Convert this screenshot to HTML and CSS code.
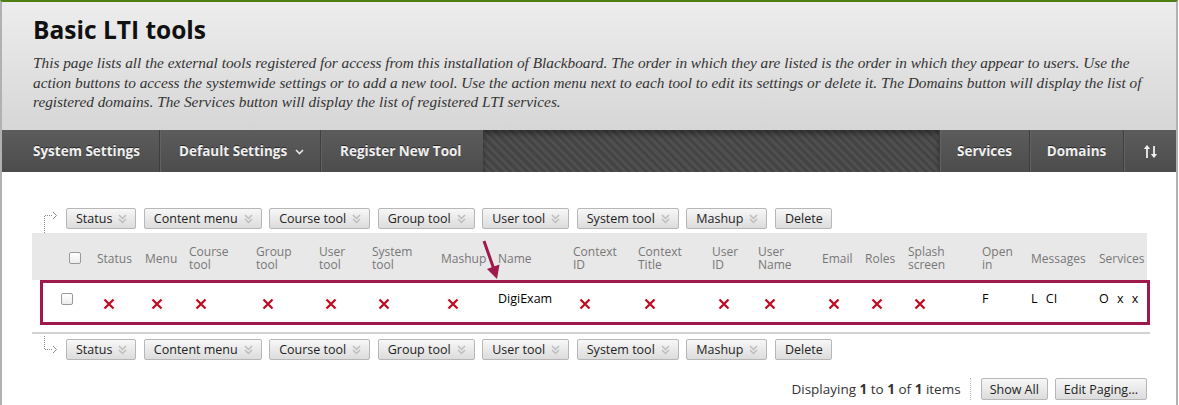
FILE: index.html
```html
<!DOCTYPE html>
<html lang="en">
<head>
<meta charset="utf-8">
<title>Basic LTI tools</title>
<link rel="stylesheet" href="styles.css">
</head>
<body>
<div class="frame">
  <header class="page-header">
    <h1 class="title">Basic LTI tools</h1>
    <p class="desc">This page lists all the external tools registered for access from this installation of Blackboard. The order in which they are listed is the order in which they appear to users. Use the action buttons to access the systemwide settings or to add a new tool. Use the action menu next to each tool to edit its settings or delete it. The Domains button will display the list of registered domains. The Services button will display the list of registered LTI services.</p>
  </header>

  <nav class="navbar">
    <div class="nav-left">
      <a class="nav-btn n-sys">System Settings</a>
      <a class="nav-btn n-def">Default Settings <svg class="nav-chev" width="9" height="6" viewBox="0 0 9 6"><polyline points="1,1 4.5,4.5 8,1" fill="none" stroke="#e6e6e6" stroke-width="1.6"/></svg></a>
      <a class="nav-btn n-reg">Register New Tool</a>
    </div>
    <div class="nav-stripes"></div>
    <div class="nav-right">
      <a class="nav-btn services">Services</a>
      <a class="nav-btn domains">Domains</a>
      <a class="nav-btn sort"><svg width="15" height="15" viewBox="0 0 15 15"><line x1="4" y1="14" x2="4" y2="3" stroke="#f0f0f0" stroke-width="1.8"/><polygon points="0.8,5 4,1 7.2,5" fill="#f0f0f0"/><line x1="11" y1="2" x2="11" y2="12" stroke="#f0f0f0" stroke-width="1.8"/><polygon points="7.8,10 11,14 14.2,10" fill="#f0f0f0"/></svg></a>
    </div>
  </nav>

  <main class="content">
    <div class="actionbar">
      <svg class="flow-icon" width="20" height="21" viewBox="0 0 20 21"><path d="M4.5 27 V7.5 H13" fill="none" stroke="#8a8a8a" stroke-width="1" stroke-dasharray="1 1"/><polyline points="13,4 16.5,7.5 13,11" fill="none" stroke="#8a8a8a" stroke-width="1"/></svg>
      <button class="abtn">Status<svg class="dchev" width="9" height="10" viewBox="0 0 9 10"><polyline points="1,1 4.5,4.5 8,1" /><polyline points="1,5 4.5,8.5 8,5"/></svg></button>
      <button class="abtn">Content menu<svg class="dchev" width="9" height="10" viewBox="0 0 9 10"><polyline points="1,1 4.5,4.5 8,1" /><polyline points="1,5 4.5,8.5 8,5"/></svg></button>
      <button class="abtn">Course tool<svg class="dchev" width="9" height="10" viewBox="0 0 9 10"><polyline points="1,1 4.5,4.5 8,1" /><polyline points="1,5 4.5,8.5 8,5"/></svg></button>
      <button class="abtn">Group tool<svg class="dchev" width="9" height="10" viewBox="0 0 9 10"><polyline points="1,1 4.5,4.5 8,1" /><polyline points="1,5 4.5,8.5 8,5"/></svg></button>
      <button class="abtn">User tool<svg class="dchev" width="9" height="10" viewBox="0 0 9 10"><polyline points="1,1 4.5,4.5 8,1" /><polyline points="1,5 4.5,8.5 8,5"/></svg></button>
      <button class="abtn">System tool<svg class="dchev" width="9" height="10" viewBox="0 0 9 10"><polyline points="1,1 4.5,4.5 8,1" /><polyline points="1,5 4.5,8.5 8,5"/></svg></button>
      <button class="abtn">Mashup<svg class="dchev" width="9" height="10" viewBox="0 0 9 10"><polyline points="1,1 4.5,4.5 8,1" /><polyline points="1,5 4.5,8.5 8,5"/></svg></button>
      <button class="abtn">Delete</button>
    </div>

    <div class="grid-wrap">
      <table class="grid">
        <colgroup>
          <col style="width:65px"><col style="width:48px"><col style="width:44px"><col style="width:67px"><col style="width:63px"><col style="width:53px"><col style="width:69px"><col style="width:57px"><col style="width:75px"><col style="width:65px"><col style="width:74px"><col style="width:46px"><col style="width:64px"><col style="width:43px"><col style="width:43px"><col style="width:74px"><col style="width:49px"><col style="width:68px"><col style="width:48px">
        </colgroup>
        <thead>
          <tr>
            <th class="cbcell"><input type="checkbox" class="cb"></th>
            <th>Status</th>
            <th>Menu</th>
            <th>Course<br>tool</th>
            <th>Group<br>tool</th>
            <th>User<br>tool</th>
            <th>System<br>tool</th>
            <th>Mashup</th>
            <th>Name</th>
            <th>Context<br>ID</th>
            <th>Context<br>Title</th>
            <th>User<br>ID</th>
            <th>User<br>Name</th>
            <th>Email</th>
            <th>Roles</th>
            <th>Splash<br>screen</th>
            <th>Open<br>in</th>
            <th>Messages</th>
            <th>Services</th>
          </tr>
        </thead>
        <tbody>
          <tr>
            <td class="cbcell"><input type="checkbox" class="cb"></td>
            <td><svg class="xmark" viewBox="0 0 12 12"><path d="M1.5 1.5 L10.5 10.5 M10.5 1.5 L1.5 10.5"/></svg></td>
            <td><svg class="xmark" viewBox="0 0 12 12"><path d="M1.5 1.5 L10.5 10.5 M10.5 1.5 L1.5 10.5"/></svg></td>
            <td><svg class="xmark" viewBox="0 0 12 12"><path d="M1.5 1.5 L10.5 10.5 M10.5 1.5 L1.5 10.5"/></svg></td>
            <td><svg class="xmark" viewBox="0 0 12 12"><path d="M1.5 1.5 L10.5 10.5 M10.5 1.5 L1.5 10.5"/></svg></td>
            <td><svg class="xmark" viewBox="0 0 12 12"><path d="M1.5 1.5 L10.5 10.5 M10.5 1.5 L1.5 10.5"/></svg></td>
            <td><svg class="xmark" viewBox="0 0 12 12"><path d="M1.5 1.5 L10.5 10.5 M10.5 1.5 L1.5 10.5"/></svg></td>
            <td><svg class="xmark" viewBox="0 0 12 12"><path d="M1.5 1.5 L10.5 10.5 M10.5 1.5 L1.5 10.5"/></svg></td>
            <td>DigiExam</td>
            <td><svg class="xmark" viewBox="0 0 12 12"><path d="M1.5 1.5 L10.5 10.5 M10.5 1.5 L1.5 10.5"/></svg></td>
            <td><svg class="xmark" viewBox="0 0 12 12"><path d="M1.5 1.5 L10.5 10.5 M10.5 1.5 L1.5 10.5"/></svg></td>
            <td><svg class="xmark" viewBox="0 0 12 12"><path d="M1.5 1.5 L10.5 10.5 M10.5 1.5 L1.5 10.5"/></svg></td>
            <td><svg class="xmark" viewBox="0 0 12 12"><path d="M1.5 1.5 L10.5 10.5 M10.5 1.5 L1.5 10.5"/></svg></td>
            <td><svg class="xmark" viewBox="0 0 12 12"><path d="M1.5 1.5 L10.5 10.5 M10.5 1.5 L1.5 10.5"/></svg></td>
            <td><svg class="xmark" viewBox="0 0 12 12"><path d="M1.5 1.5 L10.5 10.5 M10.5 1.5 L1.5 10.5"/></svg></td>
            <td><svg class="xmark" viewBox="0 0 12 12"><path d="M1.5 1.5 L10.5 10.5 M10.5 1.5 L1.5 10.5"/></svg></td>
            <td>F</td>
            <td class="spaced">L CI</td>
            <td class="spaced">O x x</td>
          </tr>
        </tbody>
      </table>
      <div class="highlight"></div>
      <svg class="pointer" width="480" height="50" viewBox="0 0 480 50"><line x1="452" y1="8" x2="461.5" y2="35" stroke="#a0194c" stroke-width="3"/><polygon points="465,46 467.5,31.5 455,36" fill="#a0194c"/></svg>
    </div>

    <div class="rule"></div>

    <div class="actionbar bottom">
      <svg class="flow-icon" width="20" height="21" viewBox="0 0 20 21"><path d="M4.5 -3 V10.5 H13" fill="none" stroke="#8a8a8a" stroke-width="1" stroke-dasharray="1 1"/><polyline points="13,7 16.5,10.5 13,14" fill="none" stroke="#8a8a8a" stroke-width="1"/></svg>
      <button class="abtn">Status<svg class="dchev" width="9" height="10" viewBox="0 0 9 10"><polyline points="1,1 4.5,4.5 8,1" /><polyline points="1,5 4.5,8.5 8,5"/></svg></button>
      <button class="abtn">Content menu<svg class="dchev" width="9" height="10" viewBox="0 0 9 10"><polyline points="1,1 4.5,4.5 8,1" /><polyline points="1,5 4.5,8.5 8,5"/></svg></button>
      <button class="abtn">Course tool<svg class="dchev" width="9" height="10" viewBox="0 0 9 10"><polyline points="1,1 4.5,4.5 8,1" /><polyline points="1,5 4.5,8.5 8,5"/></svg></button>
      <button class="abtn">Group tool<svg class="dchev" width="9" height="10" viewBox="0 0 9 10"><polyline points="1,1 4.5,4.5 8,1" /><polyline points="1,5 4.5,8.5 8,5"/></svg></button>
      <button class="abtn">User tool<svg class="dchev" width="9" height="10" viewBox="0 0 9 10"><polyline points="1,1 4.5,4.5 8,1" /><polyline points="1,5 4.5,8.5 8,5"/></svg></button>
      <button class="abtn">System tool<svg class="dchev" width="9" height="10" viewBox="0 0 9 10"><polyline points="1,1 4.5,4.5 8,1" /><polyline points="1,5 4.5,8.5 8,5"/></svg></button>
      <button class="abtn">Mashup<svg class="dchev" width="9" height="10" viewBox="0 0 9 10"><polyline points="1,1 4.5,4.5 8,1" /><polyline points="1,5 4.5,8.5 8,5"/></svg></button>
      <button class="abtn">Delete</button>
    </div>

    <div class="paging">
      <span class="paging-text">Displaying <b>1</b> to <b>1</b> of <b>1</b> items</span>
      <span class="paging-sep"></span>
      <button class="pbtn">Show All</button>
      <button class="pbtn">Edit Paging...</button>
    </div>
  </main>
</div>
</body>
</html>
```

FILE: styles.css
```css
* { box-sizing: border-box; }

html, body {
  margin: 0;
  padding: 0;
  background: #ffffff;
}

body {
  width: 1179px;
  height: 405px;
  overflow: hidden;
  font-family: "Open Sans", "DejaVu Sans", sans-serif;
}

.frame {
  width: 1178px;
  height: 405px;
  border-top: 2px solid #4f7f12;
  border-left: 2px solid #b1b1b1;
  border-right: 2px solid #b1b1b1;
  background: #ffffff;
}

/* ---------- header ---------- */
.page-header {
  height: 128px;
  padding: 13px 0 0 31px;
  background: linear-gradient(#ededed, #d6d6d6);
}

.title {
  margin: 0;
  font-size: 24.5px;
  line-height: 30px;
  font-weight: 700;
  color: #111111;
}

.desc {
  margin: 8px 0 0;
  width: 1116px;
  font-family: "Liberation Serif", "Times New Roman", serif;
  font-style: italic;
  font-size: 15.3px;
  line-height: 19.5px;
  color: #333333;
}

/* ---------- navbar ---------- */
.navbar {
  display: flex;
  height: 42px;
  background: #4a4a4a;
}

.nav-left,
.nav-right {
  display: flex;
  background: linear-gradient(#5c5c5c, #4c4c4c);
}

.nav-left {
  padding-left: 11px;
}

.nav-btn {
  display: flex;
  align-items: center;
  gap: 8px;
  padding: 0 0 0 19px;
  font-size: 13.5px;
  font-weight: 700;
  color: #efefef;
  text-shadow: 0 -1px 0 rgba(0, 0, 0, 0.55);
  border-left: 1px solid #3e3e3e;
  box-shadow: inset 1px 0 0 #626262;
  background: linear-gradient(#5c5c5c, #4c4c4c);
  white-space: nowrap;
}

.nav-btn.n-sys {
  width: 146px;
  border-left: 0;
  box-shadow: none;
  padding-left: 20px;
}

.nav-btn.n-def { width: 161px; }
.nav-btn.n-reg { width: 163px; }

.nav-chev {
  margin-top: 2px;
}

.nav-stripes {
  flex: 1;
  background: repeating-linear-gradient(45deg, #444444 0 3px, #4f4f4f 3px 6px);
  box-shadow: inset 0 4px 5px rgba(0, 0, 0, 0.35);
}

.nav-right .services { width: 90px; justify-content: center; padding: 0; }
.nav-right .domains { width: 94px; justify-content: center; padding: 0; }
.nav-right .sort { width: 53px; justify-content: center; padding: 0; }

/* ---------- content ---------- */
.content {
  padding-top: 36px;
}

.actionbar {
  display: flex;
  align-items: center;
  height: 21px;
  padding-left: 38px;
}

.flow-icon {
  flex: none;
  margin-right: 6px;
  overflow: visible;
}

.abtn {
  display: flex;
  align-items: center;
  gap: 6px;
  height: 21px;
  margin: 0 7.5px 0 0;
  padding: 0 8px 0 9px;
  border: 1px solid #b7b7b7;
  border-radius: 2px;
  background: linear-gradient(#f7f7f7, #dcdcdc);
  font-family: "Open Sans", "DejaVu Sans", sans-serif;
  font-size: 12.5px;
  color: #222222;
  white-space: nowrap;
}

.dchev polyline {
  fill: none;
  stroke: #bdbdbd;
  stroke-width: 1.5;
}

/* ---------- grid ---------- */
.grid-wrap {
  position: relative;
  width: 1115px;
  margin: 4px 0 0 30px;
}

.grid {
  width: 1115px;
  table-layout: fixed;
  border-collapse: collapse;
}

.grid th {
  height: 47px;
  padding: 3px 0 0;
  background: #e8e8e8;
  text-align: left;
  vertical-align: middle;
  font-size: 12px;
  line-height: 13px;
  font-weight: 400;
  color: #777777;
  white-space: nowrap;
}

.grid td {
  height: 45px;
  padding: 11px 0 0;
  vertical-align: top;
  font-size: 12.5px;
  line-height: 16px;
  color: #000000;
  white-space: nowrap;
}

.grid th.cbcell { padding-left: 37px; }
.grid td.cbcell { padding-left: 29px; padding-top: 13px; }

.cb {
  -webkit-appearance: none;
  appearance: none;
  display: block;
  width: 12px;
  height: 12px;
  margin: 0;
  border: 1px solid #9a9a9a;
  border-radius: 2px;
  background: linear-gradient(#ffffff, #ececec);
}

.xmark {
  display: block;
  width: 12px;
  height: 12px;
  margin: 7px 0 0 6px;
}

.xmark path {
  fill: none;
  stroke: #c10d21;
  stroke-width: 2.3;
}

.spaced {
  word-spacing: 5px;
}

.highlight {
  position: absolute;
  left: 8px;
  top: 47px;
  width: 1110px;
  height: 45px;
  border: 3px solid #a0194c;
}

.pointer {
  position: absolute;
  left: 0;
  top: 0;
}

.rule {
  width: 1118px;
  height: 2px;
  margin: 7px 0 0 30px;
  background: #d2d2d2;
}

.actionbar.bottom {
  margin-top: 5px;
}

/* ---------- paging ---------- */
.paging {
  display: flex;
  align-items: center;
  justify-content: flex-end;
  margin-top: 18px;
  padding-right: 29px;
  height: 22px;
}

.paging-text {
  font-size: 13.5px;
  color: #333333;
}

.paging-text b {
  font-weight: 700;
}

.paging-sep {
  width: 0;
  height: 22px;
  margin: 0 10px 0 9px;
  border-left: 1px dotted #bdbdbd;
}

.pbtn {
  height: 22px;
  margin-left: 7px;
  padding: 0 8px;
  border: 1px solid #b7b7b7;
  border-radius: 2px;
  background: linear-gradient(#f7f7f7, #dcdcdc);
  font-family: "Open Sans", "DejaVu Sans", sans-serif;
  font-size: 12.5px;
  color: #222222;
}

.paging-sep + .pbtn {
  margin-left: 0;
}
```
